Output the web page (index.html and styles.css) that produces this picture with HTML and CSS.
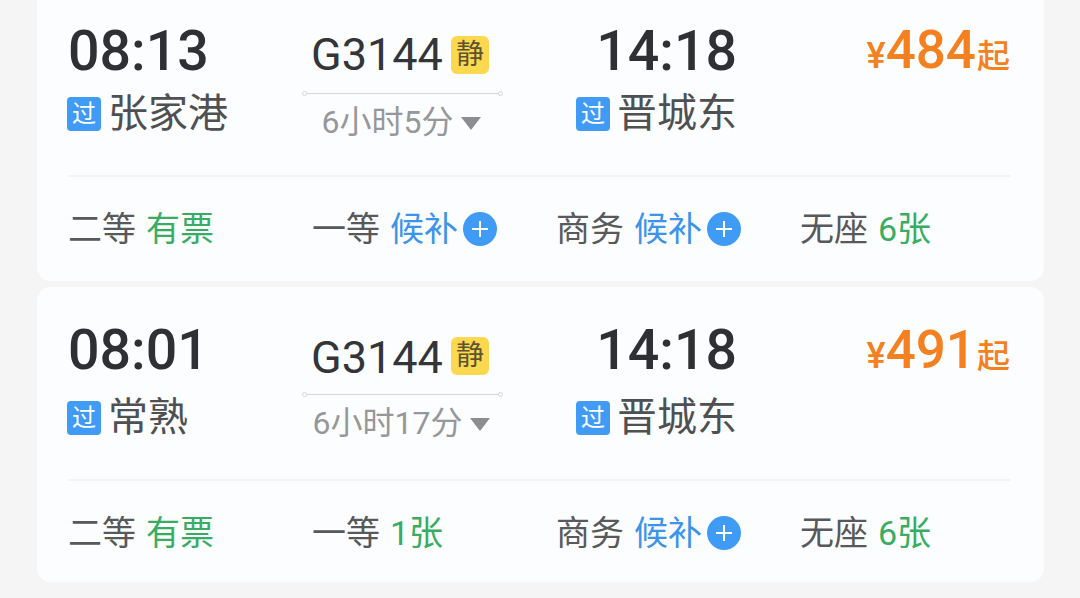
FILE: index.html
```html
<!DOCTYPE html>
<html lang="zh-CN">
<head>
  <meta charset="UTF-8">
  <meta name="viewport" content="width=device-width, initial-scale=1.0">
  <title>车次列表</title>
  <link rel="stylesheet" href="styles.css">
</head>
<body>
  <div class="train-list">
    <div class="card">
      <div class="trip">
        <div class="stop">
          <div class="time">08:13</div>
          <div class="station"><span class="tag">过</span>张家港</div>
        </div>
        <div class="train">
          <div class="train-no">G3144<span class="quiet">静</span></div>
          <div class="line"></div>
          <div class="duration">6小时5分<span class="caret"></span></div>
        </div>
        <div class="stop stop-end">
          <div class="time">14:18</div>
          <div class="station"><span class="tag">过</span>晋城东</div>
        </div>
        <div class="price"><span class="yen">¥</span>484<span class="from">起</span></div>
      </div>
      <div class="seats">
        <div class="seat">二等<span class="ok">有票</span></div>
        <div class="seat">一等<span class="wait">候补</span><span class="plus"></span></div>
        <div class="seat">商务<span class="wait">候补</span><span class="plus"></span></div>
        <div class="seat">无座<span class="ok">6张</span></div>
      </div>
    </div>

    <div class="card card-second">
      <div class="trip">
        <div class="stop">
          <div class="time">08:01</div>
          <div class="station"><span class="tag">过</span>常熟</div>
        </div>
        <div class="train">
          <div class="train-no">G3144<span class="quiet">静</span></div>
          <div class="line"></div>
          <div class="duration">6小时17分<span class="caret"></span></div>
        </div>
        <div class="stop stop-end">
          <div class="time">14:18</div>
          <div class="station"><span class="tag">过</span>晋城东</div>
        </div>
        <div class="price"><span class="yen">¥</span>491<span class="from">起</span></div>
      </div>
      <div class="seats">
        <div class="seat">二等<span class="ok">有票</span></div>
        <div class="seat">一等<span class="ok">1张</span></div>
        <div class="seat">商务<span class="wait">候补</span><span class="plus"></span></div>
        <div class="seat">无座<span class="ok">6张</span></div>
      </div>
    </div>
  </div>
</body>
</html>
```

FILE: styles.css
```css
html, body {
  height: 100%;
  overflow: hidden;
}
body {
  font-family: Roboto, "Noto Sans CJK SC", sans-serif;
  background: #f5f5f5;
  margin: 0;
}
.train-list {
  display: flex;
  flex-direction: column;
  gap: 6px;
  margin: -12px 36px 0 37px;
}
.card {
  background: #fcfdfe;
  border-radius: 14px;
  height: 293px;
  padding: 0 34px 0 31px;
  box-sizing: border-box;
}
.card-second {
  height: 295px;
}
.trip {
  display: grid;
  grid-template-columns: 234px 201px 234px 1fr;
  height: 189px;
  padding-top: 33px;
  box-sizing: border-box;
  border-bottom: 2px solid #f2f3f4;
}
.card-second .trip {
  height: 194px;
}
.stop-end {
  text-align: right;
}
.time {
  font-size: 55.5px;
  font-weight: 500;
  line-height: 62px;
  color: #2e3033;
}
.station {
  display: flex;
  align-items: center;
  font-size: 40px;
  line-height: 50px;
  color: #4f5052;
  margin: 6px 0 0 -1px;
}
.stop-end .station {
  justify-content: flex-end;
}
.card-second .station {
  margin-top: 11px;
}
.tag {
  width: 34px;
  height: 34px;
  margin-right: 7px;
  border-radius: 4px;
  background: #3f9bf6;
  color: #fff;
  font-size: 24px;
  line-height: 34px;
  text-align: center;
}
.train {
  text-align: center;
}
.train-no {
  display: flex;
  align-items: center;
  justify-content: center;
  font-size: 45px;
  line-height: 56px;
  color: #333538;
  margin-top: 6px;
  padding-right: 5px;
}
.card-second .train-no {
  margin-top: 10px;
}
.quiet {
  width: 38px;
  height: 38px;
  margin-left: 8px;
  border-radius: 6px;
  background: #fcd84f;
  color: #5c5330;
  font-size: 28px;
  line-height: 38px;
}
.card-second .quiet {
  margin-bottom: 5px;
}
.line {
  position: relative;
  height: 1px;
  margin-top: 10px;
  background: #d5d6d9;
}
.card-second .line {
  margin-top: 8px;
}
.line::before,
.line::after {
  content: "";
  position: absolute;
  top: -2px;
  width: 5px;
  height: 5px;
  box-sizing: border-box;
  border: 1px solid #d5d6d9;
  border-radius: 50%;
  background: #fcfdfe;
}
.line::before {
  left: 0;
}
.line::after {
  right: 0;
}
.duration {
  display: flex;
  align-items: center;
  justify-content: center;
  font-size: 32px;
  line-height: 42px;
  color: #96979a;
  margin-top: 7px;
  padding-right: 2px;
}
.caret {
  width: 0;
  height: 0;
  margin: 2px 0 0 8px;
  border-left: 10px solid transparent;
  border-right: 10px solid transparent;
  border-top: 13px solid #8c8d90;
}
.price {
  text-align: right;
  font-size: 53px;
  line-height: 58px;
  font-weight: 500;
  color: #f58020;
  white-space: nowrap;
}
.card-second .price {
  padding-top: 1px;
}
.yen {
  font-size: 36px;
}
.from {
  font-size: 33px;
  font-weight: 500;
  margin-left: 1px;
}
.seats {
  display: grid;
  grid-template-columns: repeat(4, 244px);
  padding-top: 30px;
}
.seat {
  display: flex;
  align-items: center;
  font-size: 34px;
  line-height: 44px;
  color: #58595b;
}
.ok {
  color: #38ad62;
  margin-left: 10px;
}
.wait {
  color: #3d94ea;
  margin-left: 10px;
}
.plus {
  position: relative;
  width: 34px;
  height: 34px;
  border-radius: 50%;
  background: #3f9bf6;
  margin-left: 5px;
}
.plus::before,
.plus::after {
  content: "";
  position: absolute;
  background: #fff;
}
.plus::before {
  left: 9px;
  top: 16px;
  width: 16px;
  height: 2px;
}
.plus::after {
  left: 16px;
  top: 9px;
  width: 2px;
  height: 16px;
}
```
